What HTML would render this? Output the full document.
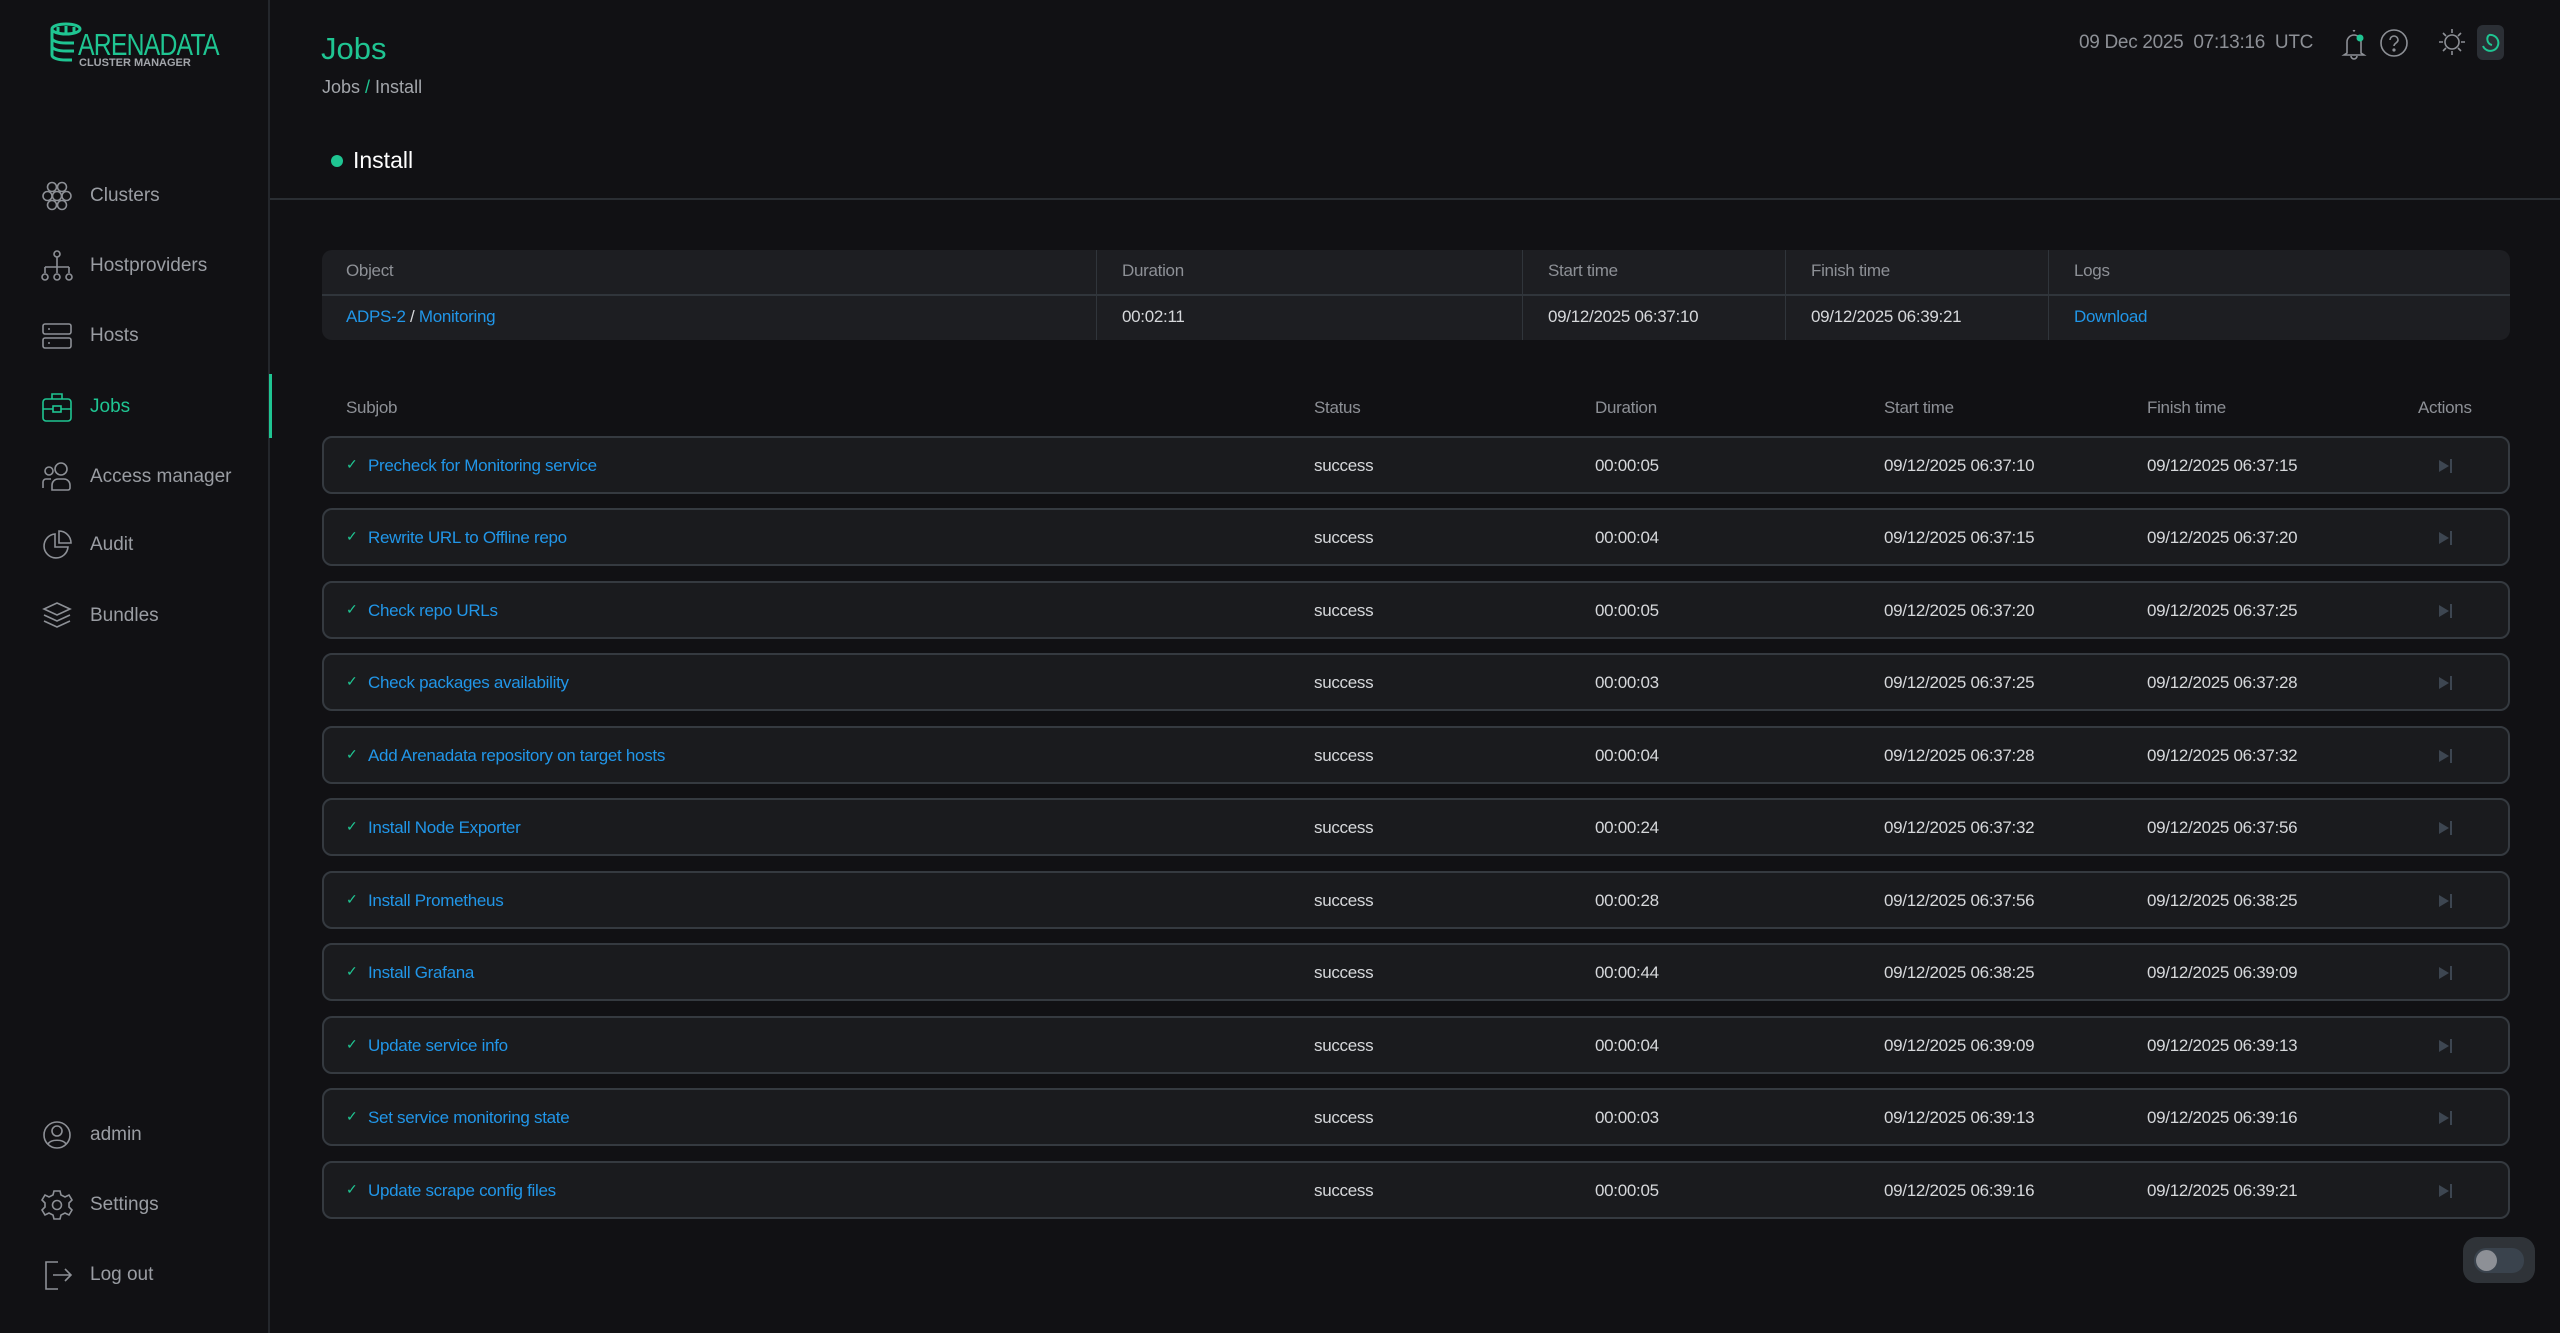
<!DOCTYPE html>
<html><head><meta charset="utf-8"><style>
*{box-sizing:border-box;margin:0;padding:0}
body{width:2560px;height:1333px;background:#111114;font-family:"Liberation Sans",sans-serif;color:#a3a6ab;position:relative;overflow:hidden}
.abs{position:absolute}
.side{left:0;top:0;width:270px;height:1333px;border-right:2px solid #24272c}
.nav{position:absolute;left:40px;height:36px;display:flex;align-items:center;font-size:19px;color:#9a9da3}
.nav svg{width:34px;height:34px;margin-right:16px;fill:none;stroke:#8d9096;stroke-width:1.6}
.nav.act{color:#1fc592}.nav.act svg{stroke:#1fc592}
.t{font-size:17px;letter-spacing:-0.3px}
.blue{color:#2196e8}
.row{position:absolute;left:322px;width:2188px;height:58px;border:2px solid #353a40;border-radius:10px;background:#1a1b1e}
.row span{position:absolute;top:18px;font-size:17px;color:#d6d8db;letter-spacing:-0.3px}
.row .n{left:44px;color:#2196e8}
.row .ck{left:22px;top:18px;color:#1fc592;font-size:14px}
.row .a{position:absolute;left:2112px;top:19px;width:18px;height:18px}
</style></head><body>
<div class="abs side">
 <svg class="abs" style="left:48px;top:22px" width="40" height="44" viewBox="0 0 40 44" fill="none" stroke="#1fc592" stroke-width="3"><ellipse cx="18" cy="7" rx="14" ry="5"/><path d="M4 7v26c0 3 6 5 14 5h6M4 16c0 3 6 5 14 5h8M4 24c0 3 6 5 14 5h8M10 5v6M18 4v7M26 5v6"/></svg>
 <div class="abs" style="left:78px;top:27px;font-size:31px;color:#1fc592;letter-spacing:-1px;transform:scaleX(0.8);transform-origin:0 0">ARENADATA</div>
 <div class="abs" style="left:79px;top:57px;font-size:11px;color:#a3a6ab;font-weight:bold">CLUSTER MANAGER</div>
 <div class="nav" style="top:178px"><svg viewBox="0 0 34 34"><circle cx="12" cy="8" r="4.5"/><circle cx="22" cy="8" r="4.5"/><circle cx="7.5" cy="17" r="4.5"/><circle cx="17" cy="17" r="4.5"/><circle cx="26.5" cy="17" r="4.5"/><circle cx="12" cy="26" r="4.5"/><circle cx="22" cy="26" r="4.5"/></svg>Clusters</div>
 <div class="nav" style="top:248px"><svg viewBox="0 0 34 34"><circle cx="17" cy="5" r="3"/><path d="M17 8v10M5 18h24M5 18v6M17 18v6M29 18v6"/><circle cx="5" cy="28" r="3"/><circle cx="17" cy="28" r="3"/><circle cx="29" cy="28" r="3"/></svg>Hostproviders</div>
 <div class="nav" style="top:318px"><svg viewBox="0 0 34 34"><rect x="3" y="5" width="28" height="10" rx="2"/><rect x="3" y="19" width="28" height="10" rx="2"/><path d="M8 10h2M8 24h2"/></svg>Hosts</div>
 <div class="nav act" style="top:389px"><svg viewBox="0 0 34 34"><rect x="3" y="9" width="28" height="22" rx="3"/><path d="M12 9V4h10v5M3 19h10M21 19h10"/><rect x="13" y="16" width="8" height="6"/></svg>Jobs</div>
 <div class="nav" style="top:459px"><svg viewBox="0 0 34 34"><circle cx="9" cy="11" r="4"/><circle cx="21" cy="9" r="6"/><path d="M3 28v-6a3 3 0 013-3h5M12 30v-5a6 6 0 016-6h6a6 6 0 016 6v3a2 2 0 01-2 2z"/></svg>Access manager</div>
 <div class="nav" style="top:527px"><svg viewBox="0 0 34 34"><path d="M15 6a12 12 0 1013 13H15z"/><path d="M19 3a12 12 0 0112 12H19z"/></svg>Audit</div>
 <div class="nav" style="top:598px"><svg viewBox="0 0 34 34"><path d="M17 4l13 6-13 6-13-6zM4 16l13 6 13-6M4 22l13 6 13-6"/></svg>Bundles</div>
 <div class="nav" style="top:1117px"><svg viewBox="0 0 34 34"><circle cx="17" cy="17" r="13"/><circle cx="17" cy="13" r="5"/><path d="M8 26c3-5 15-5 18 0"/></svg>admin</div>
 <div class="nav" style="top:1187px"><svg viewBox="0 0 34 34"><circle cx="17" cy="17" r="4.5"/><path d="M14 3h6l1 4 4 2 4-2 3 5-3 3v4l3 3-3 5-4-2-4 2-1 4h-6l-1-4-4-2-4 2-3-5 3-3v-4L2 12l3-5 4 2 4-2z"/></svg>Settings</div>
 <div class="nav" style="top:1257px"><svg viewBox="0 0 34 34"><path d="M18 4H6v27h12M13 17h18M25 11l6 6-6 6"/></svg>Log out</div>
</div>
<div class="abs" style="left:269px;top:374px;width:3px;height:64px;background:#1fc592"></div>

<div class="abs" style="left:321px;top:31px;font-size:31px;color:#1fc592">Jobs</div>
<div class="abs" style="left:322px;top:77px;font-size:18px;color:#a3a6ab">Jobs <span style="color:#1fc592">/</span> Install</div>
<div class="abs" style="left:331px;top:155px;width:12px;height:12px;border-radius:50%;background:#1fc592"></div>
<div class="abs" style="left:353px;top:147px;font-size:23px;color:#fff">Install</div>
<div class="abs" style="left:270px;top:198px;width:2290px;height:2px;background:#2a2e33"></div>

<div class="abs t" style="left:2079px;top:32px;font-size:19px;color:#8d9096">09 Dec 2025&nbsp; 07:13:16&nbsp; UTC</div>
<svg class="abs" style="left:2339px;top:27px" width="30" height="34" viewBox="0 0 30 34" fill="none" stroke="#8d9096" stroke-width="1.6"><path d="M14 4a2 2 0 012 0M8 26V15a7 7 0 0114 0v11l3 2H5z M12 29a3 3 0 006 0"/><circle cx="21" cy="11" r="3.5" fill="#1fc592" stroke="none"/></svg>
<svg class="abs" style="left:2379px;top:28px" width="30" height="30" viewBox="0 0 30 30" fill="none" stroke="#8d9096" stroke-width="1.6"><circle cx="15" cy="15" r="13"/><path d="M11 12a4 4 0 118 0c0 3-4 3-4 6"/><circle cx="15" cy="22" r="0.8" fill="#8d9096"/></svg>
<svg class="abs" style="left:2438px;top:28px" width="28" height="28" viewBox="0 0 28 28" fill="none" stroke="#8d9096" stroke-width="1.6"><circle cx="14" cy="14" r="7"/><path d="M14 1v4M14 23v4M1 14h4M23 14h4M5 5l3 3M20 20l3 3M5 23l3-3M20 8l3-3"/></svg>
<div class="abs" style="left:2477px;top:25px;width:27px;height:35px;border-radius:6px;background:#2b2f35"></div>
<svg class="abs" style="left:2480px;top:32px" width="22" height="22" viewBox="0 0 22 22" fill="none" stroke="#1fc592" stroke-width="2"><path d="M9 3a8 8 0 11-6 11M9 3a6 6 0 003 10"/></svg>

<div class="abs" style="left:322px;top:250px;width:2188px;height:90px;background:#1d1e22;border-radius:10px"></div>
<div class="abs" style="left:322px;top:294px;width:2188px;height:2px;background:#30353b"></div>
<div class="abs" style="left:1096px;top:250px;width:1px;height:90px;background:#30353b"></div>
<div class="abs" style="left:1522px;top:250px;width:1px;height:90px;background:#30353b"></div>
<div class="abs" style="left:1785px;top:250px;width:1px;height:90px;background:#30353b"></div>
<div class="abs" style="left:2048px;top:250px;width:1px;height:90px;background:#30353b"></div>
<div class="abs t" style="left:346px;top:261px;color:#8d9096">Object</div>
<div class="abs t" style="left:1122px;top:261px;color:#8d9096">Duration</div>
<div class="abs t" style="left:1548px;top:261px;color:#8d9096">Start time</div>
<div class="abs t" style="left:1811px;top:261px;color:#8d9096">Finish time</div>
<div class="abs t" style="left:2074px;top:261px;color:#8d9096">Logs</div>
<div class="abs t" style="left:346px;top:307px;color:#d6d8db"><span class="blue">ADPS-2</span> / <span class="blue">Monitoring</span></div>
<div class="abs t" style="left:1122px;top:307px;color:#d6d8db">00:02:11</div>
<div class="abs t" style="left:1548px;top:307px;color:#d6d8db">09/12/2025 06:37:10</div>
<div class="abs t" style="left:1811px;top:307px;color:#d6d8db">09/12/2025 06:39:21</div>
<div class="abs t blue" style="left:2074px;top:307px">Download</div>

<div class="abs t" style="left:346px;top:398px;color:#8d9096">Subjob</div>
<div class="abs t" style="left:1314px;top:398px;color:#8d9096">Status</div>
<div class="abs t" style="left:1595px;top:398px;color:#8d9096">Duration</div>
<div class="abs t" style="left:1884px;top:398px;color:#8d9096">Start time</div>
<div class="abs t" style="left:2147px;top:398px;color:#8d9096">Finish time</div>
<div class="abs t" style="left:2418px;top:398px;color:#8d9096">Actions</div>

<div class="row" style="top:436px"><span class="ck">✓</span><span class="n">Precheck for Monitoring service</span><span style="left:990px">success</span><span style="left:1271px">00:00:05</span><span style="left:1560px">09/12/2025 06:37:10</span><span style="left:1823px">09/12/2025 06:37:15</span><svg class="a" viewBox="0 0 18 18"><path d="M3 3l10 6-10 6z" fill="#3d4651"/><rect x="14" y="2" width="2" height="14" fill="#3d4651"/></svg></div>
<div class="row" style="top:508px"><span class="ck">✓</span><span class="n">Rewrite URL to Offline repo</span><span style="left:990px">success</span><span style="left:1271px">00:00:04</span><span style="left:1560px">09/12/2025 06:37:15</span><span style="left:1823px">09/12/2025 06:37:20</span><svg class="a" viewBox="0 0 18 18"><path d="M3 3l10 6-10 6z" fill="#3d4651"/><rect x="14" y="2" width="2" height="14" fill="#3d4651"/></svg></div>
<div class="row" style="top:581px"><span class="ck">✓</span><span class="n">Check repo URLs</span><span style="left:990px">success</span><span style="left:1271px">00:00:05</span><span style="left:1560px">09/12/2025 06:37:20</span><span style="left:1823px">09/12/2025 06:37:25</span><svg class="a" viewBox="0 0 18 18"><path d="M3 3l10 6-10 6z" fill="#3d4651"/><rect x="14" y="2" width="2" height="14" fill="#3d4651"/></svg></div>
<div class="row" style="top:653px"><span class="ck">✓</span><span class="n">Check packages availability</span><span style="left:990px">success</span><span style="left:1271px">00:00:03</span><span style="left:1560px">09/12/2025 06:37:25</span><span style="left:1823px">09/12/2025 06:37:28</span><svg class="a" viewBox="0 0 18 18"><path d="M3 3l10 6-10 6z" fill="#3d4651"/><rect x="14" y="2" width="2" height="14" fill="#3d4651"/></svg></div>
<div class="row" style="top:726px"><span class="ck">✓</span><span class="n">Add Arenadata repository on target hosts</span><span style="left:990px">success</span><span style="left:1271px">00:00:04</span><span style="left:1560px">09/12/2025 06:37:28</span><span style="left:1823px">09/12/2025 06:37:32</span><svg class="a" viewBox="0 0 18 18"><path d="M3 3l10 6-10 6z" fill="#3d4651"/><rect x="14" y="2" width="2" height="14" fill="#3d4651"/></svg></div>
<div class="row" style="top:798px"><span class="ck">✓</span><span class="n">Install Node Exporter</span><span style="left:990px">success</span><span style="left:1271px">00:00:24</span><span style="left:1560px">09/12/2025 06:37:32</span><span style="left:1823px">09/12/2025 06:37:56</span><svg class="a" viewBox="0 0 18 18"><path d="M3 3l10 6-10 6z" fill="#3d4651"/><rect x="14" y="2" width="2" height="14" fill="#3d4651"/></svg></div>
<div class="row" style="top:871px"><span class="ck">✓</span><span class="n">Install Prometheus</span><span style="left:990px">success</span><span style="left:1271px">00:00:28</span><span style="left:1560px">09/12/2025 06:37:56</span><span style="left:1823px">09/12/2025 06:38:25</span><svg class="a" viewBox="0 0 18 18"><path d="M3 3l10 6-10 6z" fill="#3d4651"/><rect x="14" y="2" width="2" height="14" fill="#3d4651"/></svg></div>
<div class="row" style="top:943px"><span class="ck">✓</span><span class="n">Install Grafana</span><span style="left:990px">success</span><span style="left:1271px">00:00:44</span><span style="left:1560px">09/12/2025 06:38:25</span><span style="left:1823px">09/12/2025 06:39:09</span><svg class="a" viewBox="0 0 18 18"><path d="M3 3l10 6-10 6z" fill="#3d4651"/><rect x="14" y="2" width="2" height="14" fill="#3d4651"/></svg></div>
<div class="row" style="top:1016px"><span class="ck">✓</span><span class="n">Update service info</span><span style="left:990px">success</span><span style="left:1271px">00:00:04</span><span style="left:1560px">09/12/2025 06:39:09</span><span style="left:1823px">09/12/2025 06:39:13</span><svg class="a" viewBox="0 0 18 18"><path d="M3 3l10 6-10 6z" fill="#3d4651"/><rect x="14" y="2" width="2" height="14" fill="#3d4651"/></svg></div>
<div class="row" style="top:1088px"><span class="ck">✓</span><span class="n">Set service monitoring state</span><span style="left:990px">success</span><span style="left:1271px">00:00:03</span><span style="left:1560px">09/12/2025 06:39:13</span><span style="left:1823px">09/12/2025 06:39:16</span><svg class="a" viewBox="0 0 18 18"><path d="M3 3l10 6-10 6z" fill="#3d4651"/><rect x="14" y="2" width="2" height="14" fill="#3d4651"/></svg></div>
<div class="row" style="top:1161px"><span class="ck">✓</span><span class="n">Update scrape config files</span><span style="left:990px">success</span><span style="left:1271px">00:00:05</span><span style="left:1560px">09/12/2025 06:39:16</span><span style="left:1823px">09/12/2025 06:39:21</span><svg class="a" viewBox="0 0 18 18"><path d="M3 3l10 6-10 6z" fill="#3d4651"/><rect x="14" y="2" width="2" height="14" fill="#3d4651"/></svg></div>

<div class="abs" style="left:2463px;top:1237px;width:72px;height:46px;border-radius:14px;background:#2f3338"></div>
<div class="abs" style="left:2474px;top:1248px;width:50px;height:25px;border-radius:12px;background:#3a434d"></div>
<div class="abs" style="left:2476px;top:1250px;width:21px;height:21px;border-radius:50%;background:#8d9096"></div>
</body></html>
